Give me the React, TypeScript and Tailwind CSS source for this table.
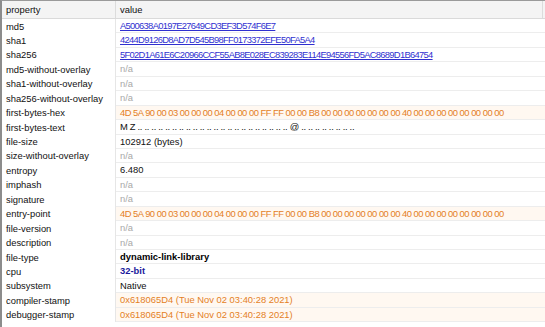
import React from "react";

type Kind = "link" | "na" | "hex" | "text" | "bold" | "cpu" | "stamp" | "bytes";
type Row = { k: string; v: string; kind: Kind };

const HEX =
  "4D 5A 90 00 03 00 00 00 04 00 00 00 FF FF 00 00 B8 00 00 00 00 00 00 00 40 00 00 00 00 00 00 00 00";
const BYTES = "M Z" + " ..".repeat(22) + " @" + " ..".repeat(8);
const STAMP = "0x618065D4 (Tue Nov 02 03:40:28 2021)";

const rows: Row[] = [
  { k: "md5", v: "A500638A0197E27649CD3EF3D574F6E7", kind: "link" },
  { k: "sha1", v: "4244D9126D8AD7D545B98FF0173372EFE50FA5A4", kind: "link" },
  { k: "sha256", v: "5F02D1A61E6C20966CCF55AB8E028EC839283E114E94556FD5AC8689D1B64754", kind: "link" },
  { k: "md5-without-overlay", v: "n/a", kind: "na" },
  { k: "sha1-without-overlay", v: "n/a", kind: "na" },
  { k: "sha256-without-overlay", v: "n/a", kind: "na" },
  { k: "first-bytes-hex", v: HEX, kind: "hex" },
  { k: "first-bytes-text", v: BYTES, kind: "bytes" },
  { k: "file-size", v: "102912 (bytes)", kind: "text" },
  { k: "size-without-overlay", v: "n/a", kind: "na" },
  { k: "entropy", v: "6.480", kind: "text" },
  { k: "imphash", v: "n/a", kind: "na" },
  { k: "signature", v: "n/a", kind: "na" },
  { k: "entry-point", v: HEX, kind: "hex" },
  { k: "file-version", v: "n/a", kind: "na" },
  { k: "description", v: "n/a", kind: "na" },
  { k: "file-type", v: "dynamic-link-library", kind: "bold" },
  { k: "cpu", v: "32-bit", kind: "cpu" },
  { k: "subsystem", v: "Native", kind: "text" },
  { k: "compiler-stamp", v: STAMP, kind: "stamp" },
  { k: "debugger-stamp", v: STAMP, kind: "stamp" },
];

function Value({ r }: { r: Row }) {
  switch (r.kind) {
    case "link":
      return <span className="text-[#3030d0] underline tracking-[-0.7px]">{r.v}</span>;
    case "na":
      return <span className="text-[#a8a8a8]">{r.v}</span>;
    case "hex":
      return <span className="text-[#e47f25] tracking-[-0.5px]">{r.v}</span>;
    case "stamp":
      return <span className="text-[#e47f25]">{r.v}</span>;
    case "bold":
      return <span className="font-bold text-black">{r.v}</span>;
    case "cpu":
      return <span className="font-bold text-[#1a1a9c]">{r.v}</span>;
    case "bytes":
      return <span className="text-[#111] tracking-[-0.3px]">{r.v}</span>;
    default:
      return <span className="text-[#111]">{r.v}</span>;
  }
}

export default function App() {
  const orange = (k: Kind) => k === "hex" || k === "stamp";
  return (
    <div
      className="w-[545px] h-[327px] bg-white overflow-hidden border-t border-t-[#9a9a9a] border-l-2 border-l-[#8c8c8c] text-[9.4px] leading-none"
      style={{ fontFamily: '"Liberation Sans", Arial, sans-serif' }}
    >
      <div className="grid grid-cols-[114px_1fr] h-[18px] bg-[#f4f4f4] border-b border-b-[#dadada]">
        <div className="flex items-center pl-1 text-[#111] border-r border-r-[#dcdcdc]">property</div>
        <div className="flex items-center pl-1 text-[#111] mr-[2px] border-r border-r-[#dcdcdc]">value</div>
      </div>
      {rows.map((r) => (
        <div key={r.k} className="grid grid-cols-[114px_1fr] h-[14.45px]">
          <div className="flex items-center pl-1 text-[#111] whitespace-nowrap border-r border-r-[#e6e6e6]">
            {r.k}
          </div>
          <div
            className={`flex items-center pl-1 whitespace-nowrap overflow-hidden border-b border-b-[#ededed] ${
              orange(r.kind) ? "bg-[#fff8f1]" : "bg-white"
            }`}
          >
            <Value r={r} />
          </div>
        </div>
      ))}
    </div>
  );
}
